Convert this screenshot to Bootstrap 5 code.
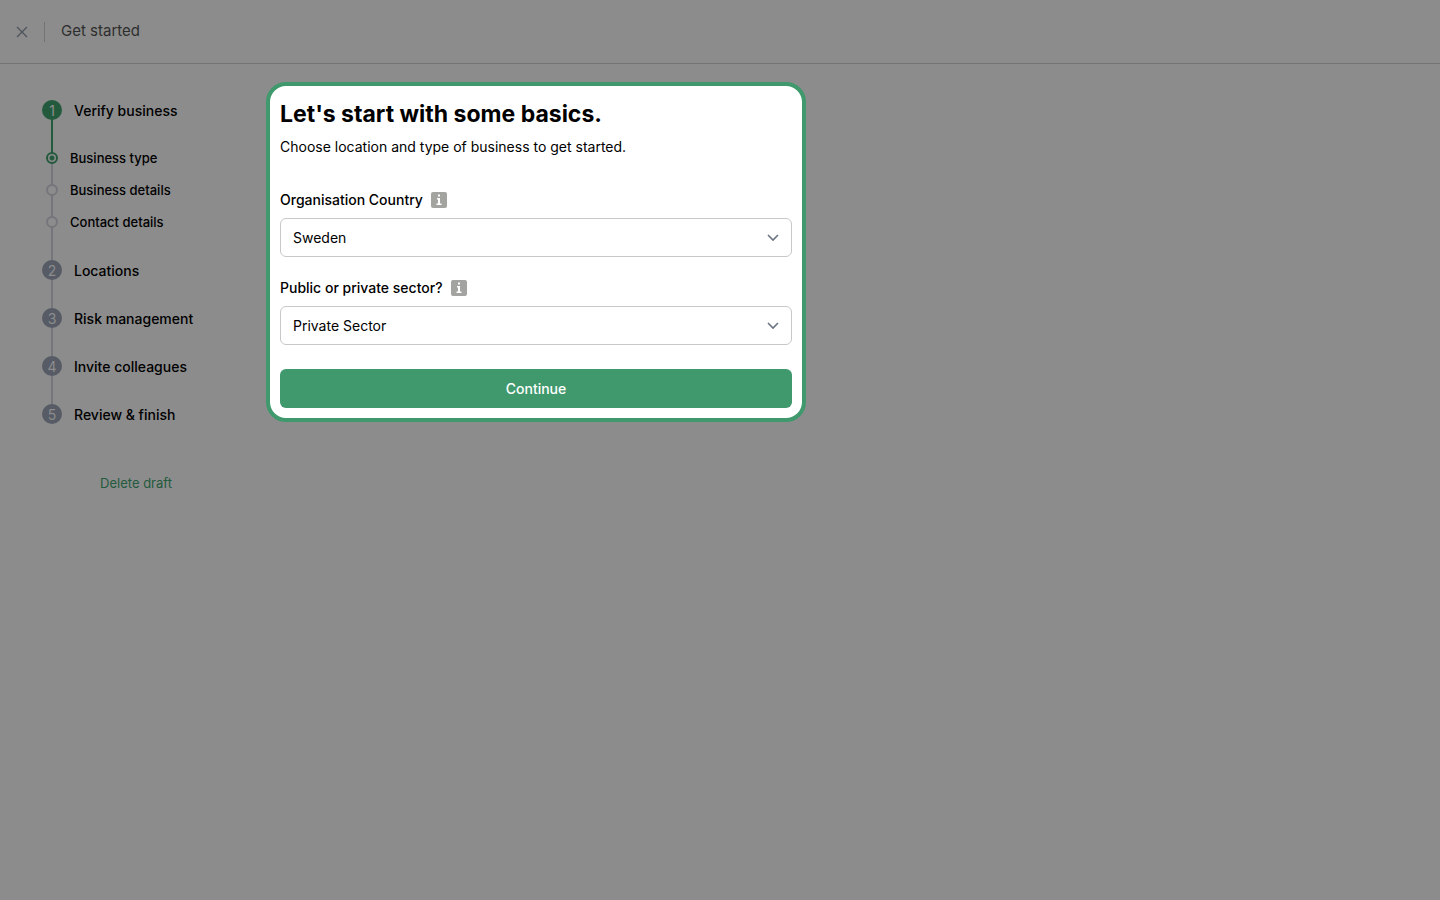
<!DOCTYPE html>
<html lang="en">
<head>
<meta charset="utf-8">
<meta name="viewport" content="width=device-width, initial-scale=1">
<title>Get started</title>
<link href="https://cdn.jsdelivr.net/npm/bootstrap@5.3.0/dist/css/bootstrap.min.css" rel="stylesheet">
<style>
  :root { --page: #8c8c8c; --brand: #3f996d; --brand-dim: #235a3d; --rail: #75757c; --dot: #565b66; }
  body { background: var(--page); color: #000; font-family: Inter, "Liberation Sans", sans-serif; font-size: 14px; line-height: 20px; }
  .topbar { height: 64px; border-bottom: 1px solid #737373; }
  .topbar-close { width: 12px; height: 12px; color: #4c525a; }
  .topbar-close svg { display: block; }
  .topbar-rule { width: 1px; height: 20px; background: #737375; }
  .topbar-title { font-size: 15px; font-weight: 400; color: #2e2e2e; padding-bottom: 2px; }
  .page-body { padding: 18px 16px; column-gap: 10px; }
  .side { width: 240px; padding-top: 4px; }
  .step-row { height: 48px; padding-left: 26px; gap: 12px; font-weight: 500; }
  .step-row a { padding-top: 2px; }
  .substep-row { height: 32px; padding-left: 30px; gap: 12px; font-size: 13px; font-weight: 500; }
  .step-row a, .substep-row a { color: #000; }
  /* rail that joins a step to the one below it */
  .railed::before { content: ""; position: absolute; left: 35px; top: 50%; width: 2px; height: 48px; background: var(--rail); }
  .railed.short::before { height: 32px; }
  .railed.active::before { background: var(--brand-dim); }
  .num { position: relative; width: 20px; height: 20px; padding-top: 2px; border-radius: 50%; background: var(--dot); color: var(--page); font-weight: 400; }
  .num.active { background: var(--brand-dim); }
  .ring { position: relative; width: 12px; height: 12px; border-radius: 50%; border: 2px solid var(--rail); background: var(--page); }
  .ring.active { border-color: var(--brand-dim); background: radial-gradient(circle, var(--brand-dim) 2px, var(--page) 3px); }
  .draft-link { color: var(--brand-dim); font-size: 13px; margin-top: 35px; }
  .basics { max-width: 540px; border: 4px solid var(--brand); border-radius: 20px; background: #fff; padding: 10px; }
  .basics h1 { font-size: 23px; line-height: 36px; font-weight: 700; }
  .intro { margin: 5px 0 33px; }
  .field label { font-weight: 500; }
  .field + .field { margin-top: 21px; }
  .info-btn { width: 16px; height: 16px; }
  .info-btn svg { display: block; }
  .pick { height: 39px; margin-top: 8px; padding: 0 36px 0 12px; font-size: 14px; color: #000; border: 1px solid #c8c8c8; border-radius: 6px;
    background-image: url("data:image/svg+xml,%3Csvg xmlns='http://www.w3.org/2000/svg' viewBox='0 0 12 8'%3E%3Cpath d='M1 1l5 5 5-5' fill='none' stroke='%236b7280' stroke-width='1.600'/%3E%3C/svg%3E");
    background-size: 12px 8px; background-position: right 12px center; }
  .go { height: 39px; margin-top: 24px; background: var(--brand); color: #fff; font-size: 14px; font-weight: 500; border: 0; border-radius: 6px; padding: 0; }
  .go:hover { background: #36865f; color: #fff; }
</style>
</head>
<body>
<header class="topbar d-flex align-items-center px-3 gap-3">
  <button type="button" class="topbar-close btn p-0 border-0" aria-label="Close"><svg width="12" height="12" viewBox="0 0 12 12" fill="none" stroke="currentColor" stroke-width="1.200"><path d="M1 1l10 10M11 1 1 11"/></svg></button>
  <span class="topbar-rule"></span>
  <span class="topbar-title">Get started</span>
</header>
<div class="page-body d-flex align-items-start">
  <nav class="side flex-shrink-0" aria-label="Progress">
    <ol class="list-unstyled mb-0">
      <li>
        <div class="step-row railed active position-relative d-flex align-items-center"><span class="num active d-flex align-items-center justify-content-center">1</span><a href="#" class="text-decoration-none">Verify business</a></div>
        <ol class="list-unstyled py-2">
          <li class="substep-row railed short position-relative d-flex align-items-center"><span class="ring active"></span><a href="#" class="text-decoration-none">Business type</a></li>
          <li class="substep-row railed short position-relative d-flex align-items-center"><span class="ring"></span><a href="#" class="text-decoration-none">Business details</a></li>
          <li class="substep-row railed position-relative d-flex align-items-center"><span class="ring"></span><a href="#" class="text-decoration-none">Contact details</a></li>
        </ol>
      </li>
      <li class="step-row railed position-relative d-flex align-items-center"><span class="num d-flex align-items-center justify-content-center">2</span><a href="#" class="text-decoration-none">Locations</a></li>
      <li class="step-row railed position-relative d-flex align-items-center"><span class="num d-flex align-items-center justify-content-center">3</span><a href="#" class="text-decoration-none">Risk management</a></li>
      <li class="step-row railed position-relative d-flex align-items-center"><span class="num d-flex align-items-center justify-content-center">4</span><a href="#" class="text-decoration-none">Invite colleagues</a></li>
      <li class="step-row position-relative d-flex align-items-center"><span class="num d-flex align-items-center justify-content-center">5</span><a href="#" class="text-decoration-none">Review &amp; finish</a></li>
    </ol>
    <div class="text-center"><a href="#" class="draft-link d-inline-block text-decoration-none">Delete draft</a></div>
  </nav>
  <main class="basics flex-grow-1">
    <form>
      <h1 class="mb-0">Let's start with some basics.</h1>
      <p class="intro">Choose location and type of business to get started.</p>
      <div class="field">
        <div class="d-flex align-items-center gap-2">
          <label for="country">Organisation Country</label>
          <button type="button" class="info-btn btn p-0 border-0" aria-label="About country"><svg width="16" height="16" viewBox="0 0 16 16"><rect width="16" height="16" rx="2" fill="#a3a3a0"/><path d="M7 2.500h2v2H7zM6 6h3v5.500h1.500V13H5.500v-1.500H7v-4H6z" fill="#fff"/></svg></button>
        </div>
        <select id="country" class="pick form-select"><option>Sweden</option></select>
      </div>
      <div class="field">
        <div class="d-flex align-items-center gap-2">
          <label for="sector">Public or private sector?</label>
          <button type="button" class="info-btn btn p-0 border-0" aria-label="About sector"><svg width="16" height="16" viewBox="0 0 16 16"><rect width="16" height="16" rx="2" fill="#a3a3a0"/><path d="M7 2.500h2v2H7zM6 6h3v5.500h1.500V13H5.500v-1.500H7v-4H6z" fill="#fff"/></svg></button>
        </div>
        <select id="sector" class="pick form-select"><option>Private Sector</option></select>
      </div>
      <button type="submit" class="go btn w-100 d-block">Continue</button>
    </form>
  </main>
</div>
<script src="https://cdn.jsdelivr.net/npm/bootstrap@5.3.0/dist/js/bootstrap.bundle.min.js"></script>
</body>
</html>
